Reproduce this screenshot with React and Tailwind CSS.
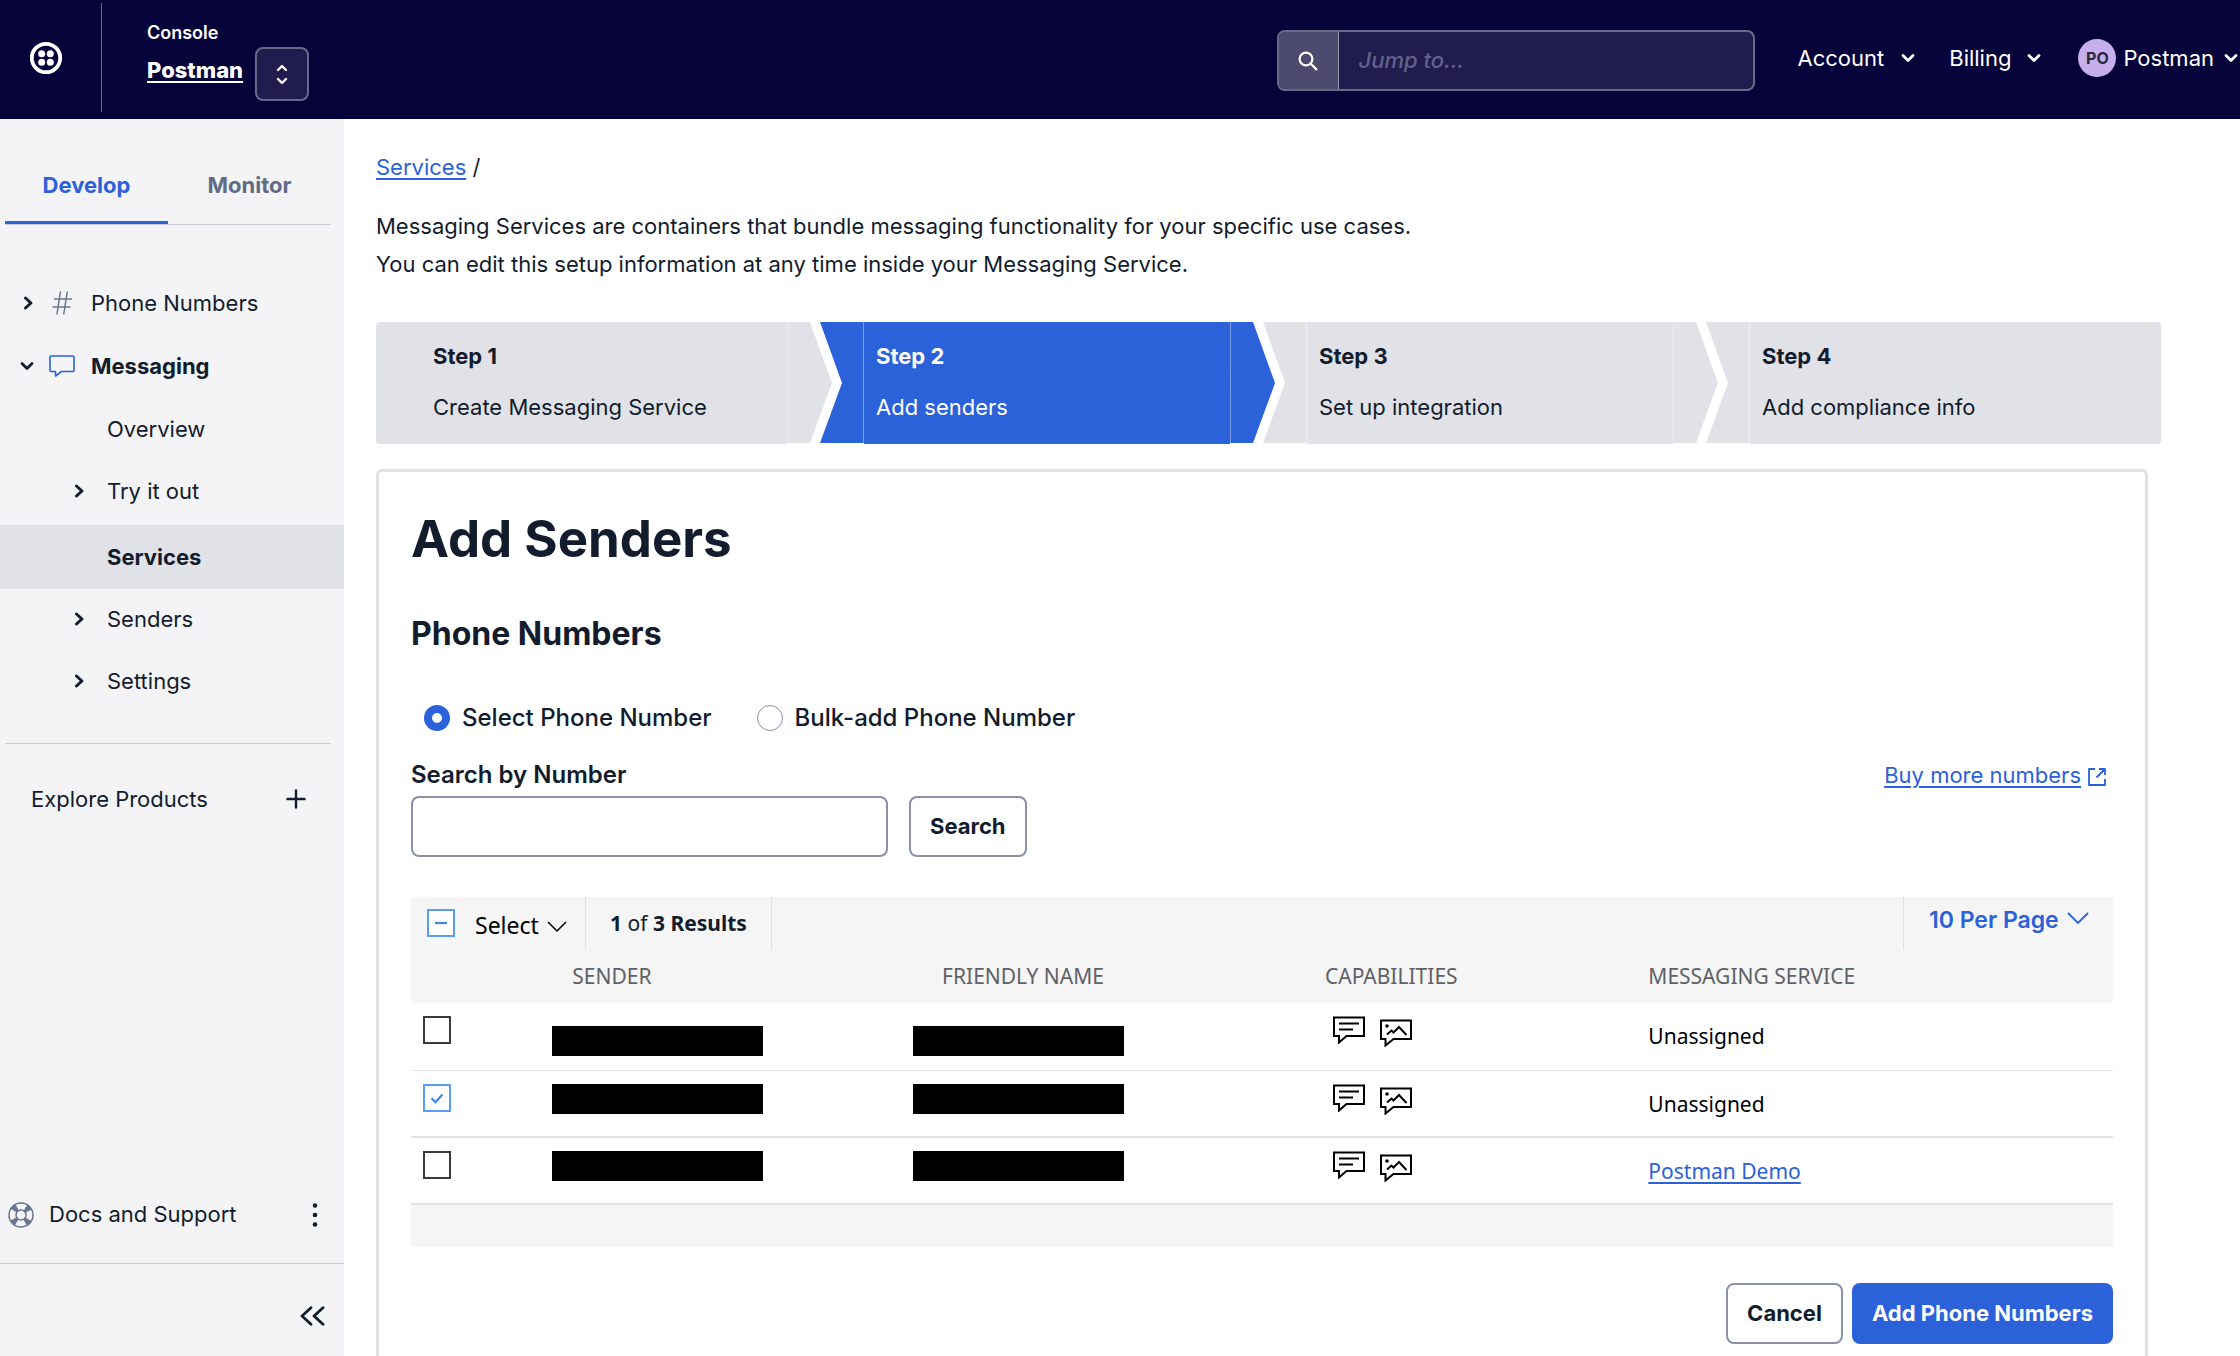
import React from "react";

const Chevron = ({ className = "", d = "M2 3l4 4 4-4", width = 2 }) => (
  <svg viewBox="0 0 12 10" fill="none" stroke="currentColor" strokeWidth={width} strokeLinecap="round" strokeLinejoin="round" className={className} aria-hidden="true">
    <path d={d} />
  </svg>
);

const ChevronRight = () => (
  <svg viewBox="0 0 10 14" fill="none" stroke="currentColor" strokeWidth="3" strokeLinecap="round" strokeLinejoin="round" className="h-[14px] w-[10px]" aria-hidden="true">
    <path d="M2.500 2l5.400 5-5.400 5" />
  </svg>
);

const ChevronDown = ({ className = "" }) => (
  <svg viewBox="0 0 14 10" fill="none" stroke="currentColor" strokeWidth="2.8" strokeLinecap="round" strokeLinejoin="round" className={"h-[10px] w-[14px] " + className} aria-hidden="true">
    <path d="M2 2.500l5 5 5-5" />
  </svg>
);

function Header() {
  return (
    <header className="flex h-[119px] shrink-0 items-start bg-[#06033a] text-white">
      <a href="#home" aria-label="Home" className="ml-[29px] mt-[41px] block">
        <svg viewBox="0 0 34 34" className="size-[34px]" aria-hidden="true">
          <circle cx="17" cy="17" r="14.2" fill="none" stroke="#fff" strokeWidth="3.8" />
          <circle cx="12.7" cy="12.7" r="3.5" fill="#fff" />
          <circle cx="21.3" cy="12.7" r="3.5" fill="#fff" />
          <circle cx="12.7" cy="21.3" r="3.5" fill="#fff" />
          <circle cx="21.3" cy="21.3" r="3.5" fill="#fff" />
        </svg>
      </a>
      <div className="ml-[38px] mt-[3px] h-[109px] w-px bg-[#6a6889]" />
      <div className="ml-[45px] pt-[21px]">
        <div className="text-lg leading-6 font-semibold">Console</div>
        <a href="#postman" className="mt-[10px] block text-[22px] leading-[30px] font-extrabold underline decoration-2 underline-offset-[3px]">Postman</a>
      </div>
      <button type="button" aria-label="Switch account" className="ml-3 mt-[47px] flex h-[54px] w-[54px] flex-col items-center justify-center gap-[3px] rounded-lg border-2 border-[#6a6889] bg-[#201c4d]">
        <Chevron className="h-[10px] w-[14px]" d="M2 7l4-4 4 4" width={2.4} />
        <Chevron className="h-[10px] w-[14px]" width={2.4} />
      </button>
      <form className="ml-auto mt-[30px] flex h-[61px] w-[478px] overflow-hidden rounded-lg border-2 border-[#6a6889] bg-[#201c4d]">
        <button type="button" aria-label="Search" className="flex w-[60px] items-center justify-center border-r border-[#9a99b0] bg-[#4d4a70]">
          <svg viewBox="0 0 20 20" fill="none" stroke="currentColor" strokeWidth="2.2" strokeLinecap="round" className="size-5" aria-hidden="true">
            <circle cx="8" cy="8" r="6.4" />
            <path d="M12.8 12.8l5.6 5.6" />
          </svg>
        </button>
        <input aria-label="Jump to" placeholder="Jump to..." className="min-w-0 flex-1 bg-transparent px-5 text-[22px] font-medium italic outline-none placeholder:text-[#606289]" />
      </form>
      <nav className="ml-[43px] mt-[39px] flex h-[38px] shrink-0 items-center text-[22px]">
        <button type="button" className="flex items-center gap-[17px]">Account <ChevronDown /></button>
        <button type="button" className="ml-[34px] flex items-center gap-4">Billing <ChevronDown /></button>
        <button type="button" className="ml-[37px] flex items-center">
          <span className="flex size-[38px] items-center justify-center rounded-full bg-[#c7aeec] text-base font-bold text-[#2a2740]">PO</span>
          <span className="ml-[7px]">Postman</span>
          <ChevronDown className="ml-[10px] mr-0.5" />
        </button>
      </nav>
    </header>
  );
}

function SubItem({ label, expandable, height = "h-16" }) {
  return (
    <li>
      <a href="#nav" className={"flex items-center pl-[74px] " + height}>
        <span className="w-[33px]">{expandable && <ChevronRight />}</span>
        {label}
      </a>
    </li>
  );
}

function Sidebar() {
  return (
    <aside className="flex w-[344px] shrink-0 flex-col bg-[#f4f4f6] text-[22px]">
      <div role="tablist" className="mr-[13px] ml-[5px] flex h-[106px] items-stretch border-b border-[#cacdd8] font-bold">
        <button type="button" role="tab" aria-selected="true" className="w-[163px] border-b-[3px] border-[#2b61d9] pt-[30px] text-[#2b61d9]">Develop</button>
        <button type="button" role="tab" aria-selected="false" className="w-[163px] border-b-[3px] border-transparent pt-[30px] text-[#606b85]">Monitor</button>
      </div>
      <nav className="pt-[46px]">
        <ul>
          <li>
            <a href="#numbers" className="flex h-16 items-center pl-[23px]">
              <ChevronRight />
              <svg viewBox="0 0 20 24" fill="none" stroke="#6a7590" strokeWidth="1.5" strokeLinecap="round" className="ml-[19px] h-6 w-5" aria-hidden="true">
                <path d="M8.4 1L5 23M15.2 1l-3.4 22M2.4 8h17M1 16h17" />
              </svg>
              <span className="ml-[19px]">Phone Numbers</span>
            </a>
          </li>
          <li>
            <a href="#messaging" className="flex h-[62px] items-center pl-5 font-bold">
              <ChevronDown />
              <svg viewBox="0 0 26 22" fill="none" stroke="#2b61d9" strokeWidth="1.6" strokeLinejoin="round" className="ml-[15px] h-[22px] w-[26px]" aria-hidden="true">
                <path d="M2 1h22c.6 0 1 .4 1 1v13.500c0 .6-.4 1-1 1H12.500L6.500 21v-4.500H2c-.6 0-1-.4-1-1V2c0-.6.4-1 1-1z" />
              </svg>
              <span className="ml-4">Messaging</span>
            </a>
          </li>
          <SubItem label="Overview" height="h-16" />
          <SubItem label="Try it out" expandable height="h-[60px]" />
          <li className="mt-1 bg-[#e1e2e8] font-bold">
            <a href="#services" aria-current="page" className="flex h-16 items-center pl-[107px]">Services</a>
          </li>
          <SubItem label="Senders" expandable height="h-[60px]" />
          <SubItem label="Settings" expandable />
        </ul>
      </nav>
      <div className="mt-[30px] mr-[13px] ml-[5px] border-t border-[#cacdd8]" />
      <button type="button" className="mt-[35px] flex h-10 items-center justify-between pr-[38px] pl-[31px]">
        Explore Products
        <svg viewBox="0 0 20 20" fill="none" stroke="currentColor" strokeWidth="2.4" strokeLinecap="round" className="size-5" aria-hidden="true">
          <path d="M10 1.500v17M1.500 10h17" />
        </svg>
      </button>
      <div className="mt-auto flex h-[98px] items-center border-b border-[#cacdd8] pl-2">
        <svg viewBox="0 0 26 26" fill="none" className="size-[26px]" aria-hidden="true">
          <circle cx="13" cy="13" r="8.500" stroke="#6a7590" strokeWidth="7" strokeDasharray="4.600 8.750" strokeDashoffset="-4.400" />
          <circle cx="13" cy="13" r="12" stroke="#6a7590" strokeWidth="1.500" />
          <circle cx="13" cy="13" r="5" stroke="#6a7590" strokeWidth="1.500" />
        </svg>
        <a href="#docs" className="ml-[15px]">Docs and Support</a>
        <button type="button" aria-label="More" className="mr-[22px] ml-auto">
          <svg viewBox="0 0 14 24" fill="currentColor" className="h-6 w-[14px]" aria-hidden="true">
            <circle cx="7" cy="2.500" r="2.300" />
            <circle cx="7" cy="12" r="2.300" />
            <circle cx="7" cy="21.500" r="2.300" />
          </svg>
        </button>
      </div>
      <div className="flex h-[92px] items-center justify-end pr-[19px]">
        <button type="button" aria-label="Collapse menu" className="pt-3">
          <svg viewBox="0 0 25 20" fill="none" stroke="currentColor" strokeWidth="2.800" strokeLinecap="round" strokeLinejoin="round" className="h-5 w-[25px]" aria-hidden="true">
            <path d="M11 1.700L2 10l9 8.300M23 1.700L14 10l9 8.300" />
          </svg>
        </button>
      </div>
    </aside>
  );
}

function Arrow({ left, right }) {
  return (
    <svg viewBox="0 0 77 122" preserveAspectRatio="none" className="h-[122px] w-[77px] shrink-0" aria-hidden="true">
      <path d="M0.400 0H23L45 61L23 121H0.400z" fill={left} />
      <path d="M33 0H76.600V121H33L55 61z" fill={right} />
    </svg>
  );
}

const GREY = "#e1e2e8";
const BLUE = "#2b61d9";

function Step({ n, label, className }) {
  return (
    <li className={"h-[122px] flex-1 basis-0 pt-[18px] text-[22px] leading-8 whitespace-nowrap " + className}>
      <div className="font-bold">Step {n}</div>
      <div className="mt-[19px]">{label}</div>
    </li>
  );
}

function Steps() {
  return (
    <ol className="mt-[39px] mr-[79px] flex">
      <Step n={1} label="Create Messaging Service" className="rounded-l bg-[#e1e2e8] pl-[57px]" />
      <Arrow left={GREY} right={BLUE} />
      <Step n={2} label="Add senders" className="bg-[#2b61d9] pl-3 text-white" />
      <Arrow left={BLUE} right={GREY} />
      <Step n={3} label="Set up integration" className="bg-[#e1e2e8] pl-3" />
      <Arrow left={GREY} right={GREY} />
      <Step n={4} label="Add compliance info" className="rounded-r bg-[#e1e2e8] pr-[45px] pl-3" />
    </ol>
  );
}

function Radio({ label, defaultChecked }) {
  return (
    <label className="flex items-center gap-3 text-[24px] font-medium">
      <input type="radio" name="mode" defaultChecked={defaultChecked} className="size-[26px] appearance-none rounded-full border border-[#8891aa] bg-white checked:border-[8px] checked:border-[#2b61d9]" />
      {label}
    </label>
  );
}

function Checkbox({ label, checked, mixed }) {
  const on = checked || mixed;
  return (
    <span className="relative block size-7">
      <input type="checkbox" aria-label={label} defaultChecked={checked} className={"block size-7 appearance-none border-2 bg-white " + (on ? "border-[#5b9bf3]" : "border-[#3a3a3a]")} />
      {on && (
        <svg viewBox="0 0 28 28" fill="none" stroke="#3d86ee" strokeWidth="2.200" className="pointer-events-none absolute inset-0 size-7" aria-hidden="true">
          <path d={mixed ? "M8 14h12" : "M8.500 14.200l4 4L19.500 10.500"} />
        </svg>
      )}
    </span>
  );
}

const Bar = () => <div className="h-[30px] w-[211px] bg-black" />;

function Capabilities() {
  return (
    <div className="flex items-start gap-[15px] pl-2">
      <svg viewBox="0 0 32 28" fill="none" stroke="#000" strokeWidth="2" className="h-7 w-8" role="img" aria-label="SMS">
        <path d="M1 1.500h30v18.500H13.500L6 26.500V20H1z" />
        <path d="M6 7.500h20M6 13.500h14" />
      </svg>
      <svg viewBox="0 0 32 28" fill="none" stroke="#000" strokeWidth="2" className="mt-[3px] h-7 w-8" role="img" aria-label="MMS">
        <path d="M1 1.500h30v18.500H13.500L5.500 26.500V20H1z" />
        <path d="M7 15.500l4.500-4 2 2L19 8l7.500 8" />
        <circle cx="7" cy="7" r="1.800" fill="#000" stroke="none" />
      </svg>
    </div>
  );
}

const rows = [
  { service: "Unassigned", checked: false, top: "pt-[23px]", line: "border-b" },
  { service: "Unassigned", checked: true, top: "pt-[13px]", line: "border-b-2" },
  { service: "Postman Demo", checked: false, link: true, top: "pt-[13px]", line: "border-b-2" },
];

function SendersTable() {
  return (
    <section className="mt-10 bg-[#f5f5f5]">
      <div className="flex h-[53px]">
        <div className="flex w-[175px] items-start border-r border-[#e1e1e3] pt-3 pl-4">
          <Checkbox label="Select all senders" mixed />
          <button type="button" className="ml-5 flex items-center gap-2 font-['Noto_Sans',sans-serif] text-[23px] leading-8 text-black">
            Select
            <svg viewBox="0 0 20 12" fill="none" stroke="currentColor" strokeWidth="1.500" className="mt-1 h-3 w-5" aria-hidden="true">
              <path d="M1 1l9 9 9-9" />
            </svg>
          </button>
        </div>
        <div className="w-[186px] border-r border-[#e1e1e3] pt-[10px] text-center font-['Noto_Sans',sans-serif] text-[21px] leading-8">
          <b>1</b> of <b>3 Results</b>
        </div>
        <div className="ml-auto flex w-[210px] items-start border-l border-[#e1e1e3] pt-[7px] pl-[25px] text-[#2b61d9]">
          <select aria-label="Results per page" className="appearance-none bg-transparent text-[23px] leading-8 font-semibold">
            <option>10 Per Page</option>
          </select>
          <svg viewBox="0 0 22 13" fill="none" stroke="currentColor" strokeWidth="1.800" className="mt-2 ml-2 h-[13px] w-[22px]" aria-hidden="true">
            <path d="M1 1l10 10L21 1" />
          </svg>
        </div>
      </div>
      <table className="w-full table-fixed border-collapse text-left font-['Noto_Sans',sans-serif] text-[21px] text-black">
        <colgroup>
          <col className="w-[8.3%]" />
          <col className="w-[21.2%]" />
          <col className="w-[24.2%]" />
          <col className="w-[19%]" />
          <col />
        </colgroup>
        <thead>
          <tr className="h-[53px] text-[#606166] [&>th]:font-normal">
            <th aria-label="Selected" />
            <th className="pl-5">SENDER</th>
            <th className="pl-[29px]">FRIENDLY NAME</th>
            <th>CAPABILITIES</th>
            <th>MESSAGING SERVICE</th>
          </tr>
        </thead>
        <tbody>
          {rows.map((r, i) => (
            <tr key={i} className={"h-[67px] border-[#e3e3e5] bg-white align-top " + r.line}>
              <td className="pt-[13px] pl-3"><Checkbox label={"Select sender " + (i + 1)} checked={r.checked} /></td>
              <td className={r.top}><Bar /></td>
              <td className={r.top}><Bar /></td>
              <td className="pt-[13px]"><Capabilities /></td>
              <td className="pt-[17px] leading-8">
                {r.link ? <a href="#demo" className="text-[#2b61d9] underline decoration-2 underline-offset-[3px]">{r.service}</a> : r.service}
              </td>
            </tr>
          ))}
        </tbody>
      </table>
      <div className="h-[42px]" />
    </section>
  );
}

export default function App() {
  return (
    <div className="flex min-h-screen flex-col bg-white font-['Inter',sans-serif] text-[#121c2d]">
      <Header />
      <div className="flex flex-1">
        <Sidebar />
        <main className="flex min-w-0 flex-1 flex-col pl-8">
          <nav aria-label="Breadcrumb" className="pt-8 text-[22px] leading-8">
            <a href="#services" className="text-[#2b61d9] underline decoration-2 underline-offset-[3px]">Services</a> /
          </nav>
          <p className="mt-6 text-[22px] leading-[38px]">
            Messaging Services are containers that bundle messaging functionality for your specific use cases.
            <br />
            You can edit this setup information at any time inside your Messaging Service.
          </p>
          <Steps />
          <div className="mt-[25px] mr-[92px] flex-1 rounded-t-md border-[3px] border-b-0 border-[#e1e2e8] px-8 pb-[10px]">
            <h1 className="mt-[35px] text-[51px] leading-[64px] font-bold">Add Senders</h1>
            <h2 className="mt-[43px] text-[32px] leading-10 font-bold">Phone Numbers</h2>
            <div className="mt-12 flex h-8 gap-[45px] pl-[13px]">
              <Radio label="Select Phone Number" defaultChecked />
              <Radio label="Bulk-add Phone Number" />
            </div>
            <div className="mt-[25px] flex items-center justify-between">
              <label htmlFor="search-number" className="text-[24px] leading-8 font-semibold">Search by Number</label>
              <a href="#buy" className="mr-[7px] flex items-center gap-[7px] text-[22px] leading-8 text-[#2b61d9]">
                <span className="underline decoration-2 underline-offset-[3px]">Buy more numbers</span>
                <svg viewBox="0 0 18 18" fill="none" stroke="currentColor" strokeWidth="1.800" strokeLinejoin="round" className="mt-1 size-[18px]" aria-hidden="true">
                  <path d="M7 1H1v16h16v-6M11 1h6v6M17 1L8.500 9.500" />
                </svg>
              </a>
            </div>
            <div className="mt-[5px] flex gap-[21px]">
              <input id="search-number" type="text" className="h-[61px] w-[477px] rounded-lg border-2 border-[#8891aa] bg-white px-4 text-[22px]" />
              <button type="button" className="h-[61px] rounded-lg border-2 border-[#8891aa] px-[19px] text-[22px] font-bold">Search</button>
            </div>
            <SendersTable />
            <div className="mt-9 flex justify-end gap-[9px] text-[22px] font-bold">
              <button type="button" className="h-[61px] rounded-lg border-2 border-[#8891aa] px-[19px]">Cancel</button>
              <button type="button" className="h-[61px] rounded-lg bg-[#2b61d9] px-5 text-white">Add Phone Numbers</button>
            </div>
          </div>
        </main>
      </div>
    </div>
  );
}
